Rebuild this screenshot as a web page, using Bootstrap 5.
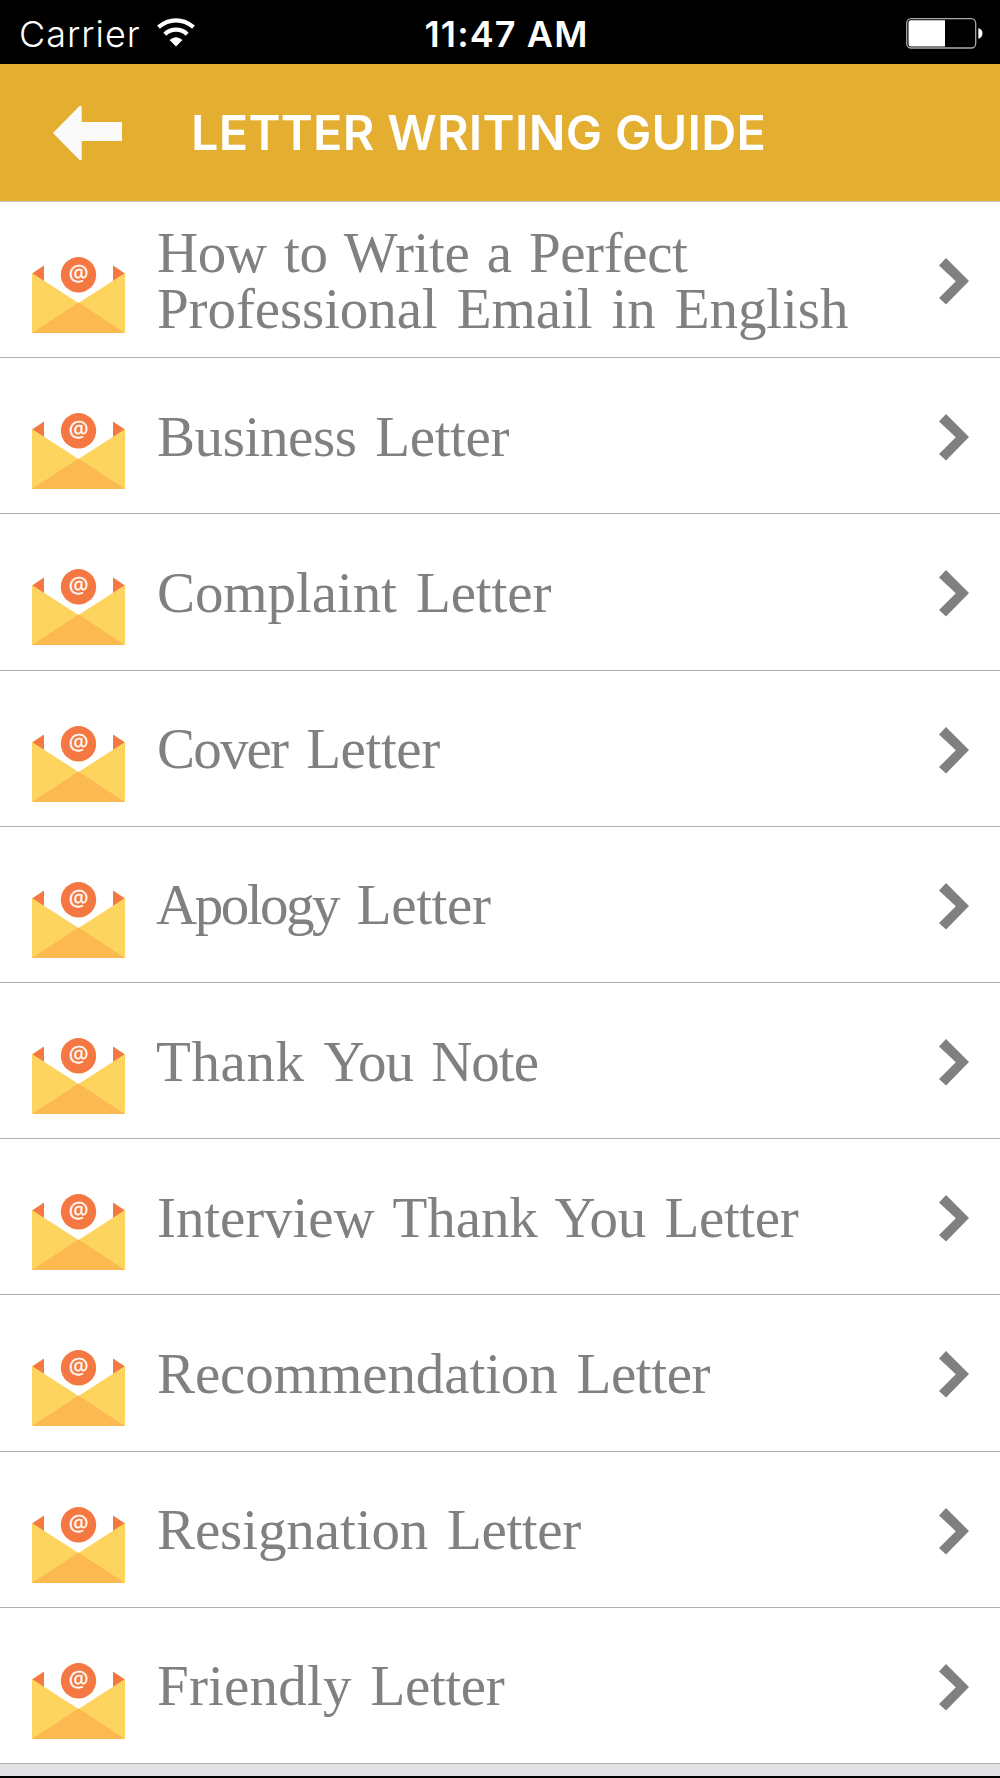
<!DOCTYPE html>
<html lang="en">
<head>
<meta charset="utf-8">
<meta name="viewport" content="width=device-width, initial-scale=1">
<title>Letter Writing Guide</title>
<link href="https://cdn.jsdelivr.net/npm/bootstrap@5.3.0/dist/css/bootstrap.min.css" rel="stylesheet">
<style>
body{height:1778px;overflow:hidden;font-family:Inter,sans-serif;background:#fff}
.status-bar{height:63.5px;background:#000;color:#fff;font-size:36px;line-height:63px;padding:6px 16px 0 19px}
.status-side{flex:1 1 0}
.carrier{font-weight:300;letter-spacing:1px}
.clock{font-weight:600;letter-spacing:1.1px;margin:0 -5px 0 5px}
.title-bar{height:138px;background:#e4ae30;color:#fff;padding-left:53px}
.title-text{font-size:48.5px;font-weight:600;line-height:1;margin:2px 0 0 69px;letter-spacing:.3px}
.guide-list{border-top:1px solid #c9c7cc;margin-top:-.5px}
.guide-row{height:156.2px;padding:2px 31.500px 0 32px;border-bottom:1.500px solid #b0b0b0;background:#fff}
.guide-label{font-family:"Liberation Serif",serif;font-size:57px;line-height:56px;color:#808080;letter-spacing:-.4px;word-spacing:5px;margin-left:32px;white-space:nowrap}
.gap-narrow{word-spacing:3.500px}
.fit-loose{letter-spacing:-.1px}
.fit-friendly{letter-spacing:.2px}
.fit-cover{letter-spacing:-1.800px}
.fit-apology{letter-spacing:-2.500px}
.fit-thank{letter-spacing:.6px}
.fit-note{letter-spacing:-1px}
.pull-start{margin-left:31px}
.mail-icon{margin-top:29px}
.next-icon{margin-top:2px}
.foot-strip{background:#e3e3e5;border-bottom:2px solid #000}
</style>
<script src="https://cdn.jsdelivr.net/npm/bootstrap@5.3.0/dist/js/bootstrap.bundle.min.js"></script>
</head>
<body class="d-flex flex-column">
<svg class="d-none" xmlns="http://www.w3.org/2000/svg">
  <symbol id="mail" viewBox="0 0 93 76">
    <path d="M0 16.5L12 8.500V25zM93 16.500L81 8.500V25z" fill="#f57842"/>
    <path d="M0 16L46.500 46 93 16V76H0z" fill="#fdd45d"/>
    <path d="M0 76L46.500 45.500 93 76z" fill="#fdb951"/>
    <circle cx="46.500" cy="17.800" r="17.700" fill="#f57842"/>
    <text x="46.500" y="24" text-anchor="middle" font-family="Open Sans, sans-serif" font-size="22" stroke="#fff" stroke-width=".3" fill="#fff">@</text>
  </symbol>
  <symbol id="next" viewBox="0 0 30 47">
    <path d="M0 7.500L7 0 30 23 7 46.500 0 40 16.800 23.200z" fill="#808080"/>
  </symbol>
</svg>
<header class="flex-shrink-0">
  <div class="status-bar d-flex align-items-center">
    <div class="status-side d-flex align-items-center">
      <span class="carrier">Carrier</span>
      <svg width="38" height="29" viewBox="0 0 38 29" style="margin:-5px 0 0 16px">
        <g fill="none" stroke="#fff" stroke-width="4.300">
          <path d="M1.500 9.200Q9.500 2.300 19 2.300T36.500 9.200"/>
          <path d="M7.800 16.200Q12.500 11.700 19 11.700T30.200 16.200"/>
        </g>
        <path d="M12.500 22Q19 16.500 25.500 22L19 28.500z" fill="#fff"/>
      </svg>
    </div>
    <span class="clock">11:47 AM</span>
    <div class="status-side d-flex align-items-center justify-content-end">
      <svg width="78" height="31" viewBox="0 0 78 31" style="margin-top:-3px">
        <rect x=".7" y=".7" width="69" height="29.300" rx="4.500" fill="none" stroke="#aaa" stroke-width="1.300"/>
        <path d="M5 2.200H39V28.500H5Q2.500 28.500 2.500 26V4.700Q2.500 2.200 5 2.200z" fill="#fff"/>
        <path d="M72.300 10Q76.500 11.500 76.500 15.400T72.300 20.800z" fill="#fff"/>
      </svg>
    </div>
  </div>
  <nav class="title-bar d-flex align-items-center">
    <svg width="69" height="54" viewBox="0 0 69 54"><path d="M0 27L26.500 0H28.700V16H69V35H28.700V54H26.500z" fill="#fafafa"/></svg>
    <h1 class="title-text">LETTER WRITING GUIDE</h1>
  </nav>
</header>
<main class="guide-list flex-shrink-0">
  <div class="guide-row d-flex align-items-center"><svg class="mail-icon" width="93" height="76"><use href="#mail"/></svg><span class="guide-label"><span class="gap-narrow">How to Write a Perfect</span><br><span class="fit-loose">Professional Email in English</span></span><svg class="next-icon ms-auto" width="30" height="47"><use href="#next"/></svg></div>
  <div class="guide-row d-flex align-items-center"><svg class="mail-icon" width="93" height="76"><use href="#mail"/></svg><span class="guide-label">Business Letter</span><svg class="next-icon ms-auto" width="30" height="47"><use href="#next"/></svg></div>
  <div class="guide-row d-flex align-items-center"><svg class="mail-icon" width="93" height="76"><use href="#mail"/></svg><span class="guide-label fit-loose">Complaint Letter</span><svg class="next-icon ms-auto" width="30" height="47"><use href="#next"/></svg></div>
  <div class="guide-row d-flex align-items-center"><svg class="mail-icon" width="93" height="76"><use href="#mail"/></svg><span class="guide-label"><span class="fit-cover">Cover</span> Letter</span><svg class="next-icon ms-auto" width="30" height="47"><use href="#next"/></svg></div>
  <div class="guide-row d-flex align-items-center"><svg class="mail-icon" width="93" height="76"><use href="#mail"/></svg><span class="guide-label pull-start"><span class="fit-apology">Apology</span> Letter</span><svg class="next-icon ms-auto" width="30" height="47"><use href="#next"/></svg></div>
  <div class="guide-row d-flex align-items-center"><svg class="mail-icon" width="93" height="76"><use href="#mail"/></svg><span class="guide-label pull-start"><span class="fit-thank">Thank</span> <span class="fit-note">You Note</span></span><svg class="next-icon ms-auto" width="30" height="47"><use href="#next"/></svg></div>
  <div class="guide-row d-flex align-items-center"><svg class="mail-icon" width="93" height="76"><use href="#mail"/></svg><span class="guide-label"><span class="fit-loose">Interview Thank</span> You Letter</span><svg class="next-icon ms-auto" width="30" height="47"><use href="#next"/></svg></div>
  <div class="guide-row d-flex align-items-center"><svg class="mail-icon" width="93" height="76"><use href="#mail"/></svg><span class="guide-label"><span class="fit-loose">Recommendation</span> Letter</span><svg class="next-icon ms-auto" width="30" height="47"><use href="#next"/></svg></div>
  <div class="guide-row d-flex align-items-center"><svg class="mail-icon" width="93" height="76"><use href="#mail"/></svg><span class="guide-label"><span class="fit-loose">Resignation</span> Letter</span><svg class="next-icon ms-auto" width="30" height="47"><use href="#next"/></svg></div>
  <div class="guide-row d-flex align-items-center"><svg class="mail-icon" width="93" height="76"><use href="#mail"/></svg><span class="guide-label"><span class="fit-friendly">Friendly</span> Letter</span><svg class="next-icon ms-auto" width="30" height="47"><use href="#next"/></svg></div>
</main>
<footer class="foot-strip flex-grow-1"></footer>
</body>
</html>
